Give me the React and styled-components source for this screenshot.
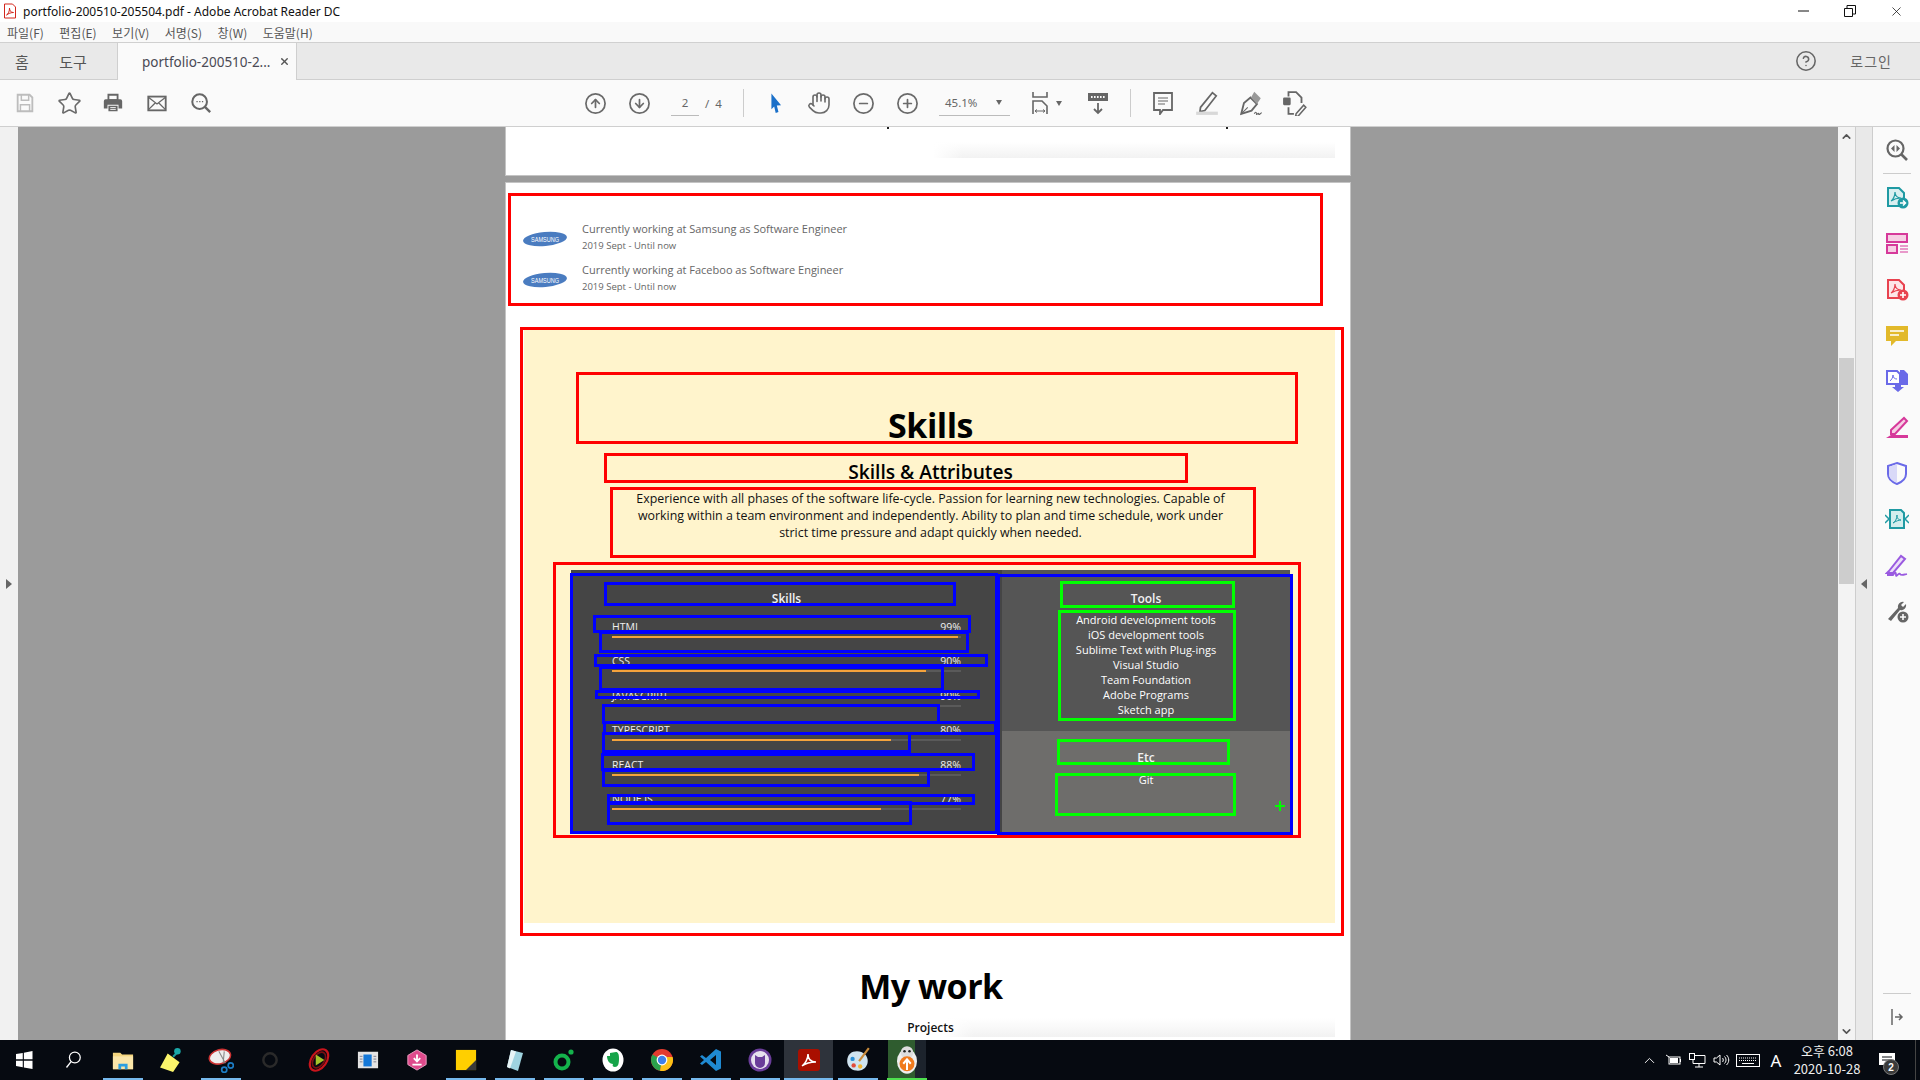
import React from "react";
import styled, { createGlobalStyle } from "styled-components";
import { CircleArrowUp, CircleArrowDown, CircleMinus, CirclePlus, CircleHelp, Hand, Star, ChevronUp, ChevronDown, X } from "lucide-react";

const KR = `"Noto Sans CJK KR", "Noto Sans", sans-serif`;
const DOC = `"Open Sans", "Noto Sans", sans-serif`;

const Global = createGlobalStyle`
  html, body { margin: 0; padding: 0; background: #fff; overflow: hidden; }
  * { box-sizing: border-box; }
`;

const Shell = styled.div`
  width: 1920px;
  height: 1080px;
  display: flex;
  flex-direction: column;
  overflow: hidden;
  font-family: ${KR};
  color: #333;
`;

const TitleBar = styled.div`
  height: 22px;
  display: flex;
  align-items: center;
  background: #fff;
  padding: 0 1px 0 3px;
`;
const TitleText = styled.span`
  margin-left: 6px;
  font: 12px "Noto Sans", sans-serif;
  color: #111;
  flex: 1;
`;
const WinButton = styled.div`
  width: 46px;
  height: 22px;
  display: flex;
  align-items: center;
  justify-content: center;
`;
const MenuBar = styled.div`
  height: 21px;
  display: flex;
  align-items: center;
  background: #f9f9f9;
  border-bottom: 1px solid #d0d0d0;
  padding-left: 7px;
  gap: 15.5px;
`;
const MenuItem = styled.span`
  font-size: 12px;
  color: #555;
  white-space: nowrap;
`;
const TabBar = styled.div`
  height: 37px;
  display: flex;
  align-items: stretch;
  background: #e9e9e9;
  border-bottom: 1px solid #cfcfcf;
`;
const NavTab = styled.div`
  width: ${(p) => p.$w}px;
  display: flex;
  align-items: center;
  justify-content: center;
  font-size: 15px;
  color: #555;
`;
const DocTab = styled.div`
  width: 180px;
  margin-bottom: -1px;
  margin-left: 15px;
  display: flex;
  align-items: center;
  padding-left: 24px;
  background: #fafafa;
  border-left: 1px solid #cfcfcf;
  border-right: 1px solid #cfcfcf;
  font: 13.5px "Noto Sans", sans-serif;
  color: #4a4a55;
  position: relative;
`;
const TabClose = styled.span`
  margin-left: 9px;
  display: flex;
  color: #555;
`;
const TabRight = styled.div`
  margin-left: auto;
  display: flex;
  align-items: center;
  padding-right: 28px;
  gap: 33px;
  font-size: 14px;
  color: #666;
  letter-spacing: 1px;
`;
const Toolbar = styled.div`
  height: 47px;
  display: flex;
  align-items: center;
  background: #fafafa;
  border-bottom: 1px solid #cfcfcf;
  padding-left: 3px;
`;
const ToolSlot = styled.div`
  width: ${(p) => p.$w || 44}px;
  margin-left: ${(p) => p.$ml || 0}px;
  height: 30px;
  display: flex;
  align-items: center;
  justify-content: center;
  gap: 3px;
  color: #6a6a6a;
`;
const PageInput = styled.div`
  width: 28px;
  height: 26px;
  margin-left: 10px;
  display: flex;
  align-items: center;
  justify-content: center;
  border-bottom: 1px solid #bbb;
  font: 11.5px "Noto Sans", sans-serif;
  color: #666;
`;
const PageCount = styled.span`
  margin-left: 6px;
  width: 17px;
  font: 11.5px "Noto Sans", sans-serif;
  word-spacing: 3px;
  color: #666;
  white-space: nowrap;
`;
const ToolSep = styled.div`
  width: 1px;
  height: 28px;
  margin-left: ${(p) => p.$ml}px;
  background: #ccc;
`;
const ZoomBox = styled.div`
  width: 71px;
  height: 26px;
  margin-left: 10px;
  padding: 0 8px 0 6px;
  display: flex;
  align-items: center;
  justify-content: space-between;
  border-bottom: 1px solid #bbb;
  font: 11.5px "Noto Sans", sans-serif;
  color: #666;
`;
const Caret = styled.span`
  width: 0;
  height: 0;
  border-left: 3.5px solid transparent;
  border-right: 3.5px solid transparent;
  border-top: 5px solid #666;
`;

const Workspace = styled.div`
  flex: 1;
  min-height: 0;
  display: flex;
`;
const LeftRail = styled.div`
  width: 18px;
  background: #f1f1f1;
  display: flex;
  align-items: center;
  justify-content: center;
`;
const Arrow = styled.span`
  width: 0;
  height: 0;
  border-top: 5px solid transparent;
  border-bottom: 5px solid transparent;
  ${(p) => (p.$left ? "border-right: 6px solid #666;" : "border-left: 6px solid #666;")}
`;
const Canvas = styled.div`
  flex: 1;
  min-width: 0;
  background: #9b9b9b;
  overflow: hidden;
  display: flex;
  flex-direction: column;
  align-items: center;
  gap: 6px;
`;
const PageStub = styled.div`
  width: 846px;
  height: 49px;
  flex: none;
  position: relative;
  background: #fff;
  border: 1px solid #c4c4c4;
  border-top: none;
`;
const Tick = styled.i`
  position: absolute;
  top: 0;
  left: ${(p) => p.$x}px;
  width: 2px;
  height: 2px;
  background: #222;
`;
const FadeBand = styled.div`
  position: absolute;
  left: ${(p) => p.$x}px;
  top: ${(p) => p.$y}px;
  width: 402px;
  height: 16px;
  background: linear-gradient(90deg, #fff, transparent 30px), linear-gradient(180deg, #fff, #f2f2f2);
`;
const Page = styled.div`
  width: 846px;
  flex: 1;
  position: relative;
  background: #fff;
  border: 1px solid #c4c4c4;
  border-bottom: none;
  font-family: ${DOC};
`;
const WorkList = styled.div`
  padding: 37px 0 0 17px;
  display: flex;
  flex-direction: column;
  gap: 7px;
`;
const WorkRow = styled.div`
  height: 34px;
  display: flex;
  align-items: center;
  gap: 15px;
`;
const LogoBox = styled.div`
  display: flex;
  margin-top: 3px;
`;
const WorkTitle = styled.div`
  font-size: 11px;
  line-height: 16px;
  color: #666;
`;
const WorkDate = styled.div`
  margin-top: 1px;
  font-size: 9.5px;
  line-height: 16px;
  color: #666;
`;
const SkillSection = styled.section`
  width: 811px;
  height: 593px;
  margin: 35px 0 0 18px;
  padding: 72px 0 0 2px;
  background: #fff4cc;
  display: flex;
  flex-direction: column;
  align-items: center;
`;
const BigHeading = styled.h1`
  margin: 0;
  font-size: 34px;
  line-height: 46px;
  font-weight: 700;
  color: #000;
  letter-spacing: -0.5px;
`;
const SubHeading = styled.h2`
  margin: 10px 0 0;
  font-size: 19.2px;
  line-height: 28px;
  font-weight: 600;
  color: #000;
`;
const Intro = styled.p`
  width: 610px;
  margin: 4px 0 0;
  font-size: 12.4px;
  line-height: 17px;
  text-align: center;
  color: #111;
`;
const PanelGrid = styled.div`
  width: 719px;
  height: 263px;
  margin-top: 29px;
  display: grid;
  grid-template-columns: 431px 288px;
`;
const SkillPanel = styled.div`
  background: #454545;
  padding: 20px 41px 0;
`;
const PanelTitle = styled.div`
  font-size: 12px;
  line-height: 18px;
  font-weight: 600;
  text-align: center;
  color: #f2f2f2;
`;
const SkillRows = styled.div`
  margin-top: 12px;
`;
const SkillRow = styled.div`
  height: 34.4px;
`;
const SkillHead = styled.div`
  display: flex;
  justify-content: space-between;
  font-size: 10.5px;
  line-height: 14px;
  color: #efefef;
`;
const Track = styled.div`
  height: 2px;
  margin-top: 2px;
  background: #5a5a5a;
`;
const Fill = styled.div`
  height: 100%;
  background: #f5a33c;
`;
const SideColumn = styled.div`
  display: flex;
  flex-direction: column;
`;
const ToolsBox = styled.div`
  height: 161px;
  padding-top: 20px;
  background: #555;
`;
const EtcBox = styled.div`
  flex: 1;
  padding-top: 18px;
  background: #6e6d6b;
`;
const SideList = styled.div`
  margin-top: ${(p) => p.$mt}px;
  font-size: 11px;
  line-height: 15.1px;
  text-align: center;
  color: #fff;
`;
const MyWork = styled.h1`
  margin: 40px 0 0;
  padding-left: 6px;
  text-align: center;
  font-size: 34px;
  line-height: 46px;
  font-weight: 700;
  color: #000;
  letter-spacing: -0.5px;
`;
const ProjectsRow = styled.div`
  width: 811px;
  height: 19px;
  margin: 9px 0 0 18px;
  padding-left: 2px;
  text-align: center;
  font-size: 12px;
  line-height: 20px;
  font-weight: 600;
  color: #111;
  background:
    linear-gradient(90deg, #fff, transparent 30px) right / 391px 100% no-repeat,
    linear-gradient(180deg, #fff, #f2f2f2) right / 391px 100% no-repeat;
`;
const Overlay = styled.div`
  position: absolute;
  inset: 0;
  pointer-events: none;
`;
const Outline = styled.div`
  position: absolute;
  left: ${(p) => p.$x}px;
  top: ${(p) => p.$y}px;
  width: ${(p) => p.$w}px;
  height: ${(p) => p.$h}px;
  border: 3px solid ${(p) => p.$color};
`;
const PlusMark = styled.div`
  position: absolute;
  left: ${(p) => p.$x}px;
  top: ${(p) => p.$y}px;
  width: 10px;
  height: 10px;
  background:
    linear-gradient(#0f0, #0f0) center / 10px 2px no-repeat,
    linear-gradient(#0f0, #0f0) center / 2px 10px no-repeat;
`;

const ScrollBar = styled.div`
  width: 17px;
  background: #f3f3f3;
  display: flex;
  flex-direction: column;
  align-items: center;
  color: #555;
`;
const ScrollEnd = styled.div`
  height: 18px;
  display: flex;
  align-items: center;
  justify-content: center;
`;
const ScrollTrack = styled.div`
  flex: 1;
  padding-top: 213px;
`;
const ScrollThumb = styled.div`
  width: 15px;
  height: 226px;
  background: #cdcdcd;
`;
const NavStrip = styled.div`
  width: 18px;
  background: #e9e9e9;
  border-left: 1px solid #cdcdcd;
  border-right: 1px solid #cdcdcd;
  display: flex;
  align-items: center;
  justify-content: center;
`;
const ToolRail = styled.div`
  width: 47px;
  background: #fafafa;
  display: flex;
  flex-direction: column;
  align-items: center;
`;
const RailSlot = styled.div`
  width: 47px;
  height: 46px;
  flex: none;
  display: flex;
  align-items: center;
  justify-content: center;
`;
const RailDivider = styled.div`
  width: 28px;
  height: 1px;
  flex: none;
  margin: ${(p) => (p.$auto ? "auto 0 0" : "0")};
  background: #ccc;
`;

const Taskbar = styled.div`
  height: 40px;
  flex: none;
  display: flex;
  background: #060a11;
`;
const TaskSlot = styled.div`
  width: 49px;
  height: 40px;
  display: flex;
  align-items: center;
  justify-content: center;
  position: relative;
  background: ${(p) =>
    p.$active
      ? "#2e333b"
      : p.$running
      ? "linear-gradient(90deg, transparent 6px, #2f5c2f 6px, #2f5c2f 33px, #1c232c 33px, #1c232c 44px, transparent 44px)"
      : "none"};
  &::after {
    content: "";
    position: absolute;
    bottom: 0;
    left: ${(p) => (p.$active ? 0 : 5)}px;
    right: ${(p) => (p.$active ? 0 : 4)}px;
    height: 2px;
    background: ${(p) => (p.$running ? "#4ee04e" : p.$open ? "#76b9ed" : "transparent")};
  }
`;
const Tray = styled.div`
  margin-left: auto;
  display: flex;
  align-items: center;
  color: #fff;
`;
const TraySlot = styled.div`
  width: ${(p) => p.$w}px;
  height: 40px;
  display: flex;
  align-items: center;
  justify-content: center;
  position: relative;
  font-size: ${(p) => p.$size || 12}px;
  font-family: "Noto Sans", sans-serif;
`;
const Clock = styled.div`
  width: 76px;
  text-align: center;
  font-size: 13px;
  line-height: 18px;
  color: #eee;
`;
const Badge = styled.span`
  position: absolute;
  left: 18px;
  top: 19px;
  width: 16px;
  height: 16px;
  border-radius: 50%;
  background: #3a3a3a;
  border: 1px solid #777;
  display: flex;
  align-items: center;
  justify-content: center;
  font: 700 10px "Liberation Sans", sans-serif;
  color: #fff;
`;
const ShowDesktop = styled.div`
  width: 5px;
  height: 40px;
  margin-left: 6px;
  border-left: 1px solid #444;
`;

const Svg = ({ s = 22, children }) => (
  <svg width={s} height={s} viewBox="0 0 24 24" fill="none">
    {children}
  </svg>
);

const swoosh = "M6 16c2-1 4-5 4-9 0 4 3 6 6 6-3 0-7 1-10 3z";

const ToolIcons = {
  save: (
    <Svg>
      <path d="M4 3h13l3 3v15H4z" stroke="#bdbdbd" strokeWidth="2" />
      <path d="M8 3v6h8V3M7 21v-7h10v7" stroke="#bdbdbd" strokeWidth="1.6" />
    </Svg>
  ),
  print: (
    <Svg>
      <path d="M7 9V3h10v6z" fill="none" stroke="#666" strokeWidth="2" />
      <path d="M4 8h16a2 2 0 0 1 2 2v8h-4v-4H6v4H2v-8a2 2 0 0 1 2-2z" fill="#666" />
      <path d="M7 15h10v6H7z" fill="#666" />
      <path d="M9 17h6M9 19h6" stroke="#fafafa" />
    </Svg>
  ),
  mail: (
    <Svg>
      <rect x="2.5" y="5" width="19" height="15" stroke="#666" strokeWidth="2" />
      <path d="M3 6l9 7 9-7M3 19l7-7M21 19l-7-7" stroke="#666" strokeWidth="1.4" />
    </Svg>
  ),
  find: (
    <Svg>
      <circle cx="10.5" cy="10.5" r="8" stroke="#666" strokeWidth="2.2" />
      <path d="M16 16l6 6" stroke="#666" strokeWidth="2.6" />
      <path d="M7 10.5h1.4M10 10.5h1.4M13 10.5h1.4" stroke="#666" strokeWidth="1.6" />
    </Svg>
  ),
  pointer: (
    <Svg>
      <path d="M7 1.5l10.5 13-4.6.3 1.8 7-3 1-1.7-7-3 3z" fill="#1b70c9" />
    </Svg>
  ),
  fit: (
    <Svg s={24}>
      <path d="M4 1v5h14V1" stroke="#666" strokeWidth="1.6" />
      <path d="M4 23V10h9l5 5v8" stroke="#666" strokeWidth="1.6" />
      <path d="M6 20h10M6 20l2-1.5M6 20l2 1.5M16 20l-2-1.5M16 20l-2 1.5" stroke="#666" />
    </Svg>
  ),
  scroll: (
    <Svg s={24}>
      <rect x="2" y="2" width="20" height="8" fill="#666" />
      <path d="M5 6h1.6M8 6h1.6M11 6h1.6M14 6h1.6M17 6h1.6" stroke="#fafafa" strokeWidth="2" />
      <path d="M12 12v10M8 18l4 4 4-4" stroke="#666" strokeWidth="1.8" />
    </Svg>
  ),
  comment: (
    <Svg s={24}>
      <path d="M3 2h18v17h-9l-3 4v-4H3z" stroke="#666" strokeWidth="1.8" />
      <path d="M7 7h10M7 10h10M7 13h7" stroke="#666" strokeWidth="1.2" />
    </Svg>
  ),
  pen: (
    <Svg s={26}>
      <path d="M6 16L17 2.5l3.5 3L10 19l-4.500 1z" stroke="#666" strokeWidth="1.6" />
      <path d="M2 20h20v3H2z" fill="#d8d8d8" />
    </Svg>
  ),
  sign: (
    <Svg s={26}>
      <path d="M3 22l2.5-10 6-5 6 6-5 6z" stroke="#666" strokeWidth="1.7" />
      <path d="M3 22l6-6" stroke="#666" />
      <path d="M12 7l3-5.500 6 6-3.500 5.500" fill="#999" />
      <path d="M15 22c1-2 2-2 2 0s2-2 2 0 2-1 3-1" stroke="#666" />
    </Svg>
  ),
  stamp: (
    <Svg s={26}>
      <path d="M6 6V2h7l5 5v5M6 16v6h5" stroke="#666" strokeWidth="1.7" />
      <rect x="1" y="7" width="7" height="7" rx="1" fill="#666" />
      <path d="M13 22l7-8 2 2-7 8-2.5.5z" stroke="#666" strokeWidth="1.4" />
    </Svg>
  ),
};

const Doc = ({ c, fill = "none" }) => (
  <>
    <path d="M3 3h11l5 5v13H3z" fill={fill} stroke={c} strokeWidth="2" />
    <path d={swoosh} stroke={c} strokeWidth="1.2" />
  </>
);

const railIcons = [
  <Svg key="a" s={24}>
    <path d="M16 16l6 6" stroke="#666" strokeWidth="2.6" />
    <circle cx="10.5" cy="10.5" r="8" stroke="#666" strokeWidth="2.2" />
    <path d="M9.5 7v7l-3.500-3.500zM11.500 7v7l3.500-3.500z" fill="#666" />
  </Svg>,
  <Svg key="b" s={24}>
    <Doc c="#1f9aa3" fill="#d9eff0" />
    <circle cx="18" cy="18" r="5.5" fill="#1f9aa3" />
    <path d="M15 18h5M18 15.5l2.5 2.5-2.500 2.500" stroke="#fff" strokeWidth="1.5" />
  </Svg>,
  <Svg key="c" s={24}>
    <rect x="2" y="3" width="20" height="8" fill="#f6cfe4" stroke="#d6399a" strokeWidth="2" />
    <rect x="2" y="14" width="10" height="8" fill="#f6cfe4" stroke="#d6399a" strokeWidth="2" />
    <path d="M15 15h8M15 18h8M15 21h8" stroke="#d6399a" />
  </Svg>,
  <Svg key="d" s={24}>
    <Doc c="#e8424f" fill="#fde6e8" />
    <circle cx="18" cy="18" r="5.5" fill="#e8424f" />
    <path d="M15 18h6M18 15v6" stroke="#fff" strokeWidth="1.6" />
  </Svg>,
  <Svg key="e" s={24}>
    <path d="M1 3h22v15H11l-5 5v-5H1z" fill="#e2b92a" />
    <path d="M5 8h14M5 12h9" stroke="#fff" strokeWidth="1.6" />
  </Svg>,
  <Svg key="f" s={24}>
    <path d="M2 2h10l3 3v10H2z" fill="#fff" stroke="#6a6ae8" strokeWidth="2" />
    <path d="M5 12c1-1 3-3 3-6 0 3 2 4 4 4" stroke="#6a6ae8" />
    <path d="M15 1h4l4 4v11h-8z" fill="#6a6ae8" />
    <path d="M10 15h6v3h3l-6 5-6-5h3z" fill="#6a6ae8" />
  </Svg>,
  <Svg key="g" s={24}>
    <path d="M6 15L19 3l3 3-12 13H6z" fill="#f6cfe4" stroke="#d6399a" strokeWidth="2" />
    <path d="M1 23l5-3h17v3z" fill="#d6399a" />
  </Svg>,
  <Svg key="h" s={24}>
    <path d="M12 2l9 3v8c0 5-4 8-9 10-5-2-9-5-9-10V5z" stroke="#6a6ae8" strokeWidth="2" />
    <path d="M12 3l-8 3v7c0 4 3 7 8 9z" fill="#d9d9f8" />
  </Svg>,
  <Svg key="i" s={24}>
    <path d="M5 3h11l3 3v15H5z" fill="#d3eeee" stroke="#1f9aa3" strokeWidth="2" />
    <path d="M8 16c2-1 4-4 4-8 0 4 2 5 4 5-2 0-5 1-8 3z" stroke="#1f9aa3" />
    <path d="M0 8l4 4-4 4M24 8l-4 4 4 4" stroke="#1f9aa3" strokeWidth="1.5" />
  </Svg>,
  <Svg key="j" s={24}>
    <path d="M4 18L16 3l4 3L8 20H2z" fill="#ecdff9" stroke="#9a5ae0" strokeWidth="2" />
    <path d="M2 22h6c2-3 3-3 3 0s3-3 4-1 3 1 7 0" stroke="#9a5ae0" strokeWidth="1.8" />
  </Svg>,
  <Svg key="k" s={24}>
    <path d="M3 20L13 9a5 5 0 0 1 6-6l-3 3 2 2 3-3a5 5 0 0 1-6 6L6 22z" fill="#666" />
    <circle cx="18" cy="18" r="5.5" fill="#666" />
    <path d="M15 18h6M18 15v6" stroke="#fafafa" strokeWidth="1.6" />
  </Svg>,
];

const task = {
  start: (
    <Svg s={18}>
      <path d="M0 4l9-1.5V11H0zM10.5 2.2L22 0v11H10.5zM0 13h9v8.500L0 20zM10.5 13H22v11l-11.5-2z" fill="#fff" />
    </Svg>
  ),
  search: (
    <Svg s={20}>
      <circle cx="13" cy="9" r="6.5" stroke="#fff" strokeWidth="1.5" />
      <path d="M8.5 14L3 21" stroke="#fff" strokeWidth="1.6" />
    </Svg>
  ),
  folder: (
    <Svg>
      <path d="M1 4h8l2 2h12v16H1z" fill="#f5d67f" />
      <path d="M1 8h22v14H1z" fill="#fbe6a9" />
      <path d="M7 22v-6h10v6h-3v-3h-4v3z" fill="#2d9fe0" />
    </Svg>
  ),
  note: (
    <Svg s={26}>
      <path d="M8 6l11 8-6 9-12-4z" fill="#fbf56b" />
      <path d="M13 9l5-5" stroke="#1a9c9c" strokeWidth="2" />
      <circle cx="17" cy="4" r="3" fill="#1aa8a8" />
    </Svg>
  ),
  snip: (
    <Svg s={26}>
      <ellipse cx="11" cy="9" rx="10" ry="6.5" transform="rotate(-15 11 9)" fill="#eee" stroke="#c33" strokeWidth="1.4" />
      <path d="M10 4l6 11M15 4l-1 11" stroke="#888" />
      <circle cx="15" cy="21" r="2.4" stroke="#1c7cc4" strokeWidth="1.6" />
      <circle cx="21" cy="17" r="2.4" stroke="#1c7cc4" strokeWidth="1.6" />
    </Svg>
  ),
  ring: (
    <Svg s={20}>
      <circle cx="12" cy="12" r="8" stroke="#2a2a2a" strokeWidth="3" />
    </Svg>
  ),
  swirl: (
    <Svg s={26}>
      <ellipse cx="12" cy="12" rx="7" ry="11" transform="rotate(35 12 12)" stroke="#c8141c" strokeWidth="2" />
      <ellipse cx="12" cy="12" rx="5" ry="8" transform="rotate(35 12 12)" stroke="#7a0d12" strokeWidth="1.6" />
      <path d="M9 7l8 5-8 5z" fill="#a5c22a" />
    </Svg>
  ),
  blue: (
    <Svg>
      <rect x="1" y="3" width="22" height="18" fill="#e4e4e4" />
      <rect x="7" y="6" width="9" height="13" fill="#1578d8" />
      <path d="M3 8h3M3 11h3M3 14h3M18 8h3M18 11h3M18 14h3" stroke="#778" />
    </Svg>
  ),
  hex: (
    <Svg>
      <path d="M12 1l10 6v10l-10 6-10-6V7z" fill="#df4a8c" stroke="#f3a5c8" />
      <path d="M12 6v7M8.5 10l3.5 3.500 3.500-3.500M7 17h10" stroke="#fff" strokeWidth="2" />
    </Svg>
  ),
  sticky: (
    <Svg>
      <rect x="1" y="1" width="22" height="22" fill="#ffcf00" />
      <path d="M23 12v11H12z" fill="#3a3a3a" />
    </Svg>
  ),
  glass: (
    <Svg s={24}>
      <path d="M8 2l12 3-5 18-11-4z" fill="#9fd3e0" />
      <path d="M8 2l5 1.5-6 17-3-1.500z" fill="#e8f4f6" />
    </Svg>
  ),
  greenO: (
    <Svg s={24}>
      <circle cx="10" cy="14" r="6.5" stroke="#14b34c" strokeWidth="4" />
      <circle cx="19" cy="4" r="2.6" fill="#14b34c" />
    </Svg>
  ),
  ever: (
    <Svg s={24}>
      <ellipse cx="12" cy="12" rx="10.5" ry="11.5" fill="#fff" />
      <path d="M6 8h3V5l6-1c2 0 3 2 3 7s-1 8-4 8c-2 0-3-1-2-3-3 0-6-3-6-8z" fill="#17a44a" />
    </Svg>
  ),
  chrome: (
    <Svg s={24}>
      <circle cx="12" cy="12" r="11" fill="#e33b2e" />
      <path d="M12 12L2.5 6.5A11 11 0 0 0 10 22.8z" fill="#2ba24c" />
      <path d="M12 12l-2 10.8A11 11 0 0 0 22.6 9H12z" fill="#fbc116" />
      <circle cx="12" cy="12" r="5.4" fill="#fff" />
      <circle cx="12" cy="12" r="4.2" fill="#3f80e8" />
    </Svg>
  ),
  vscode: (
    <Svg s={24}>
      <path d="M17 1l5 2.5v17L17 23 7 14l-4 3-2-1.5L5 12 1 8.5 3 7l4 3zM17 7l-6 5 6 5z" fill="#1f8ad2" />
    </Svg>
  ),
  cat: (
    <Svg s={24}>
      <circle cx="12" cy="12" r="11.5" fill="#6a3d9a" />
      <circle cx="12" cy="12" r="9" fill="#e6e0ee" />
      <path d="M7 7l3 2h4l3-2v8a5 5 0 0 1-10 0z" fill="#6a3d9a" />
    </Svg>
  ),
  acrobat: (
    <Svg s={24}>
      <rect x="1" y="1" width="22" height="22" rx="3" fill="#a90f00" />
      <path d="M5 18c3-2 6-7 6-12 0 5 3 8 8 8-5 0-10 1-14 4z" stroke="#fff" strokeWidth="1.5" />
    </Svg>
  ),
  paint: (
    <Svg s={26}>
      <path d="M11 4c6 0 10 4 10 9s-4 9-9 9-10-3-10-9 4-9 9-9z" fill="#cfe3ef" />
      <circle cx="7" cy="11" r="2" fill="#2b8fd6" />
      <circle cx="8" cy="17" r="2" fill="#e24b3b" />
      <circle cx="14" cy="18" r="2" fill="#f2b632" />
      <path d="M13 13L22 1" stroke="#c98b3a" strokeWidth="2" />
    </Svg>
  ),
  penguin: (
    <Svg s={30}>
      <ellipse cx="12" cy="13" rx="8" ry="10" fill="#eee" />
      <circle cx="12" cy="6" r="5" fill="#ddd" />
      <circle cx="10" cy="5" r="1" fill="#222" />
      <circle cx="14" cy="5" r="1" fill="#222" />
      <circle cx="12" cy="15" r="6" fill="#f07a1c" />
      <path d="M12 20v-8M9 15l3-3.5 3 3.5" stroke="#fff" strokeWidth="1.6" />
    </Svg>
  ),
};

const taskItems = [
  { i: "start" },
  { i: "search" },
  { i: "folder", open: true },
  { i: "note" },
  { i: "snip", open: true },
  { i: "ring" },
  { i: "swirl" },
  { i: "blue" },
  { i: "hex" },
  { i: "sticky", open: true },
  { i: "glass", open: true },
  { i: "greenO", open: true },
  { i: "ever", open: true },
  { i: "chrome", open: true },
  { i: "vscode", open: true },
  { i: "cat", open: true },
  { i: "acrobat", open: true, active: true },
  { i: "paint", open: true },
  { i: "penguin", running: true },
];

const menus = ["파일(F)", "편집(E)", "보기(V)", "서명(S)", "창(W)", "도움말(H)"];

const skills = [
  ["HTML", 99],
  ["CSS", 90],
  ["JAVASCRIPT", 90],
  ["TYPESCRIPT", 80],
  ["REACT", 88],
  ["NODE.JS", 77],
];

const tools = [
  "Android development tools",
  "iOS development tools",
  "Sublime Text with Plug-ings",
  "Visual Studio",
  "Team Foundation",
  "Adobe Programs",
  "Sketch app",
];

// detection boxes drawn over the page, in screen coordinates
const RED = "#ff0000";
const BLUE = "#0000ff";
const GREEN = "#00ff00";
const boxes = [
  [RED, 508, 193, 1323, 306],
  [RED, 520, 327, 1344, 936],
  [RED, 576, 372, 1298, 444],
  [RED, 604, 453, 1188, 483],
  [RED, 610, 487, 1256, 558],
  [RED, 553, 562, 1301, 838],
  [BLUE, 570, 573, 998, 834],
  [BLUE, 604, 582, 956, 606],
  [BLUE, 593, 615, 971, 633],
  [BLUE, 599, 631, 969, 653],
  [BLUE, 594, 654, 988, 667],
  [BLUE, 599, 666, 944, 691],
  [BLUE, 595, 690, 980, 699],
  [BLUE, 602, 704, 940, 724],
  [BLUE, 603, 721, 997, 735],
  [BLUE, 602, 732, 911, 753],
  [BLUE, 601, 753, 975, 771],
  [BLUE, 602, 769, 930, 787],
  [BLUE, 607, 794, 975, 805],
  [BLUE, 607, 801, 912, 825],
  [BLUE, 997, 574, 1293, 835],
  [GREEN, 1060, 581, 1235, 608],
  [GREEN, 1058, 610, 1236, 721],
  [GREEN, 1057, 739, 1230, 765],
  [GREEN, 1055, 773, 1236, 816],
];
const PAGE_X = 506;
const PAGE_Y = 183;

const SamsungLogo = () => (
  <svg width="44" height="18" viewBox="0 0 44 18">
    <ellipse cx="22" cy="9" rx="22" ry="7" transform="rotate(-5 22 9)" fill="#4a7cc0" />
    <text
      x="22"
      y="11.5"
      textAnchor="middle"
      fontFamily="Liberation Sans, sans-serif"
      fontSize="7"
      fill="#fff"
      textLength="28"
      lengthAdjust="spacingAndGlyphs"
    >
      SAMSUNG
    </text>
  </svg>
);

const WorkItem = ({ title }) => (
  <WorkRow>
    <LogoBox>
      <SamsungLogo />
    </LogoBox>
    <div>
      <WorkTitle>{title}</WorkTitle>
      <WorkDate>2019 Sept - Until now</WorkDate>
    </div>
  </WorkRow>
);

export default function App() {
  return (
    <Shell>
      <Global />
      <TitleBar>
        <svg width="14" height="16" viewBox="0 0 14 16" fill="none">
          <path d="M1.5 1h8l3 3v11h-11z" fill="#fff" stroke="#d3261c" />
          <path d="M3.5 12c2-1 3-4 3-7 0 3 1.5 4.5 4 4.5-2.5 0-5 1-7 2.5z" stroke="#d3261c" />
        </svg>
        <TitleText>portfolio-200510-205504.pdf - Adobe Acrobat Reader DC</TitleText>
        <WinButton>
          <svg width="12" height="2"><path d="M0 1h11" stroke="#111" /></svg>
        </WinButton>
        <WinButton>
          <svg width="12" height="12" fill="none">
            <path d="M.5 3.5h8v8h-8zM3 3V.5h8.5V9H9" stroke="#111" />
          </svg>
        </WinButton>
        <WinButton>
          <X size={15} strokeWidth={1.2} color="#111" />
        </WinButton>
      </TitleBar>

      <MenuBar>
        {menus.map((m) => (
          <MenuItem key={m}>{m}</MenuItem>
        ))}
      </MenuBar>

      <TabBar>
        <NavTab $w={44}>홈</NavTab>
        <NavTab $w={58}>도구</NavTab>
        <DocTab>
          portfolio-200510-2...
          <TabClose>
            <X size={11} strokeWidth={3} />
          </TabClose>
        </DocTab>
        <TabRight>
          <CircleHelp size={22} strokeWidth={1.7} color="#666" />
          <span>로그인</span>
        </TabRight>
      </TabBar>

      <Toolbar>
        <ToolSlot>{ToolIcons.save}</ToolSlot>
        <ToolSlot>
          <Star size={25} strokeWidth={1.6} />
        </ToolSlot>
        <ToolSlot>{ToolIcons.print}</ToolSlot>
        <ToolSlot>{ToolIcons.mail}</ToolSlot>
        <ToolSlot>{ToolIcons.find}</ToolSlot>
        <ToolSlot $ml={350}>
          <CircleArrowUp size={23} strokeWidth={1.8} />
        </ToolSlot>
        <ToolSlot>
          <CircleArrowDown size={23} strokeWidth={1.8} />
        </ToolSlot>
        <PageInput>2</PageInput>
        <PageCount>/ 4</PageCount>
        <ToolSep $ml={21} />
        <ToolSlot $ml={10} $w={43}>
          {ToolIcons.pointer}
        </ToolSlot>
        <ToolSlot>
          <Hand size={24} strokeWidth={1.6} />
        </ToolSlot>
        <ToolSlot>
          <CircleMinus size={23} strokeWidth={1.8} />
        </ToolSlot>
        <ToolSlot>
          <CirclePlus size={23} strokeWidth={1.8} />
        </ToolSlot>
        <ZoomBox>
          45.1%
          <Caret />
        </ZoomBox>
        <ToolSlot $w={50} $ml={10}>
          {ToolIcons.fit}
          <Caret />
        </ToolSlot>
        <ToolSlot $ml={6}>{ToolIcons.scroll}</ToolSlot>
        <ToolSep $ml={10} />
        <ToolSlot $ml={10}>{ToolIcons.comment}</ToolSlot>
        <ToolSlot>{ToolIcons.pen}</ToolSlot>
        <ToolSlot>{ToolIcons.sign}</ToolSlot>
        <ToolSlot>{ToolIcons.stamp}</ToolSlot>
      </Toolbar>

      <Workspace>
        <LeftRail>
          <Arrow />
        </LeftRail>
        <Canvas>
          <PageStub>
            <Tick $x={381} />
            <Tick $x={720} />
            <FadeBand $x={427} $y={15} />
          </PageStub>
          <Page>
            <WorkList>
              <WorkItem title="Currently working at Samsung as Software Engineer" />
              <WorkItem title="Currently working at Faceboo as Software Engineer" />
            </WorkList>
            <SkillSection>
              <BigHeading>Skills</BigHeading>
              <SubHeading>Skills &amp; Attributes</SubHeading>
              <Intro>
                Experience with all phases of the software life-cycle. Passion for learning new technologies. Capable of
                working within a team environment and independently. Ability to plan and time schedule, work under strict
                time pressure and adapt quickly when needed.
              </Intro>
              <PanelGrid>
                <SkillPanel>
                  <PanelTitle>Skills</PanelTitle>
                  <SkillRows>
                    {skills.map(([name, pct]) => (
                      <SkillRow key={name}>
                        <SkillHead>
                          <span>{name}</span>
                          <span>{pct}%</span>
                        </SkillHead>
                        <Track>
                          <Fill style={{ width: `${pct}%` }} />
                        </Track>
                      </SkillRow>
                    ))}
                  </SkillRows>
                </SkillPanel>
                <SideColumn>
                  <ToolsBox>
                    <PanelTitle>Tools</PanelTitle>
                    <SideList $mt={3.5}>
                      {tools.map((t) => (
                        <div key={t}>{t}</div>
                      ))}
                    </SideList>
                  </ToolsBox>
                  <EtcBox>
                    <PanelTitle>Etc</PanelTitle>
                    <SideList $mt={4.5}>Git</SideList>
                  </EtcBox>
                </SideColumn>
              </PanelGrid>
            </SkillSection>
            <MyWork>My work</MyWork>
            <ProjectsRow>Projects</ProjectsRow>
            <Overlay>
              {boxes.map(([color, x1, y1, x2, y2]) => (
                <Outline
                  key={`${x1}-${y1}`}
                  $color={color}
                  $x={x1 - PAGE_X}
                  $y={y1 - PAGE_Y}
                  $w={x2 - x1}
                  $h={y2 - y1}
                />
              ))}
              <PlusMark $x={1275 - PAGE_X} $y={801 - PAGE_Y} />
            </Overlay>
          </Page>
        </Canvas>
        <ScrollBar>
          <ScrollEnd>
            <ChevronUp size={13} strokeWidth={3} />
          </ScrollEnd>
          <ScrollTrack>
            <ScrollThumb />
          </ScrollTrack>
          <ScrollEnd>
            <ChevronDown size={13} strokeWidth={3} />
          </ScrollEnd>
        </ScrollBar>
        <NavStrip>
          <Arrow $left />
        </NavStrip>
        <ToolRail>
          <RailSlot>{railIcons[0]}</RailSlot>
          <RailDivider />
          {railIcons.slice(1).map((icon, i) => (
            <RailSlot key={i}>{icon}</RailSlot>
          ))}
          <RailDivider $auto />
          <RailSlot>
            <svg width="14" height="18" viewBox="0 0 14 18" fill="none">
              <path d="M2 1v16" stroke="#666" strokeWidth="1.5" />
              <path d="M5 9h7M9 6l3 3-3 3" stroke="#666" strokeWidth="1.5" />
            </svg>
          </RailSlot>
        </ToolRail>
      </Workspace>

      <Taskbar>
        {taskItems.map((t) => (
          <TaskSlot key={t.i} $open={t.open} $active={t.active} $running={t.running}>
            {task[t.i]}
          </TaskSlot>
        ))}
        <Tray>
          <TraySlot $w={24}>
            <ChevronUp size={17} strokeWidth={1.3} />
          </TraySlot>
          <TraySlot $w={24}>
            <svg width="17" height="12" viewBox="0 0 17 12" fill="none">
              <rect x="4" y="3" width="11" height="7" stroke="#fff" />
              <rect x="5" y="4" width="8" height="5" fill="#fff" />
              <path d="M1 1l3 2" stroke="#fff" />
              <path d="M15.5 5v3" stroke="#fff" />
            </svg>
          </TraySlot>
          <TraySlot $w={24}>
            <svg width="17" height="15" viewBox="0 0 17 15" fill="none">
              <path d="M4 2.5h12v8H4zM10 11v3M6 14h8" stroke="#fff" />
              <rect x=".5" y=".5" width="5" height="6" fill="#060a11" stroke="#fff" />
            </svg>
          </TraySlot>
          <TraySlot $w={24}>
            <svg width="17" height="14" viewBox="0 0 17 14" fill="none">
              <path d="M1 5h2.5L7 2v10L3.5 9H1z" stroke="#fff" />
              <path d="M9.5 5c1 1 1 3 0 4M11.5 3.5c2 2 2 5 0 7M13.5 2c3 3 3 7 0 10" stroke="#fff" />
            </svg>
          </TraySlot>
          <TraySlot $w={30}>
            <svg width="24" height="13" viewBox="0 0 24 13" fill="none">
              <rect x=".5" y=".5" width="23" height="12" stroke="#fff" />
              <path d="M3 4h18M3 6.5h18" stroke="#fff" strokeDasharray="1 1" />
              <path d="M6 9.5h12" stroke="#fff" />
            </svg>
          </TraySlot>
          <TraySlot $w={26} $size={17}>
            A
          </TraySlot>
          <Clock>
            <div>오후 6:08</div>
            <div>2020-10-28</div>
          </Clock>
          <TraySlot $w={44}>
            <svg width="18" height="17" viewBox="0 0 18 17">
              <path d="M1 1h16v12h-7l-3 3v-3H1z" fill="#fff" />
              <path d="M4 5h10M4 8h10" stroke="#060a11" />
            </svg>
            <Badge>2</Badge>
          </TraySlot>
          <ShowDesktop />
        </Tray>
      </Taskbar>
    </Shell>
  );
}
